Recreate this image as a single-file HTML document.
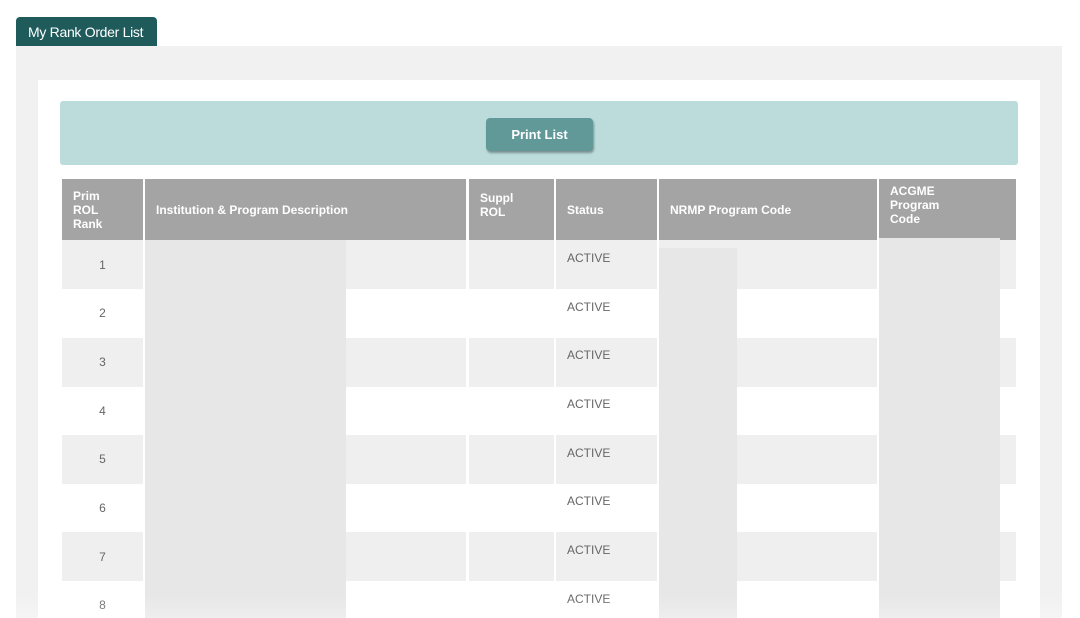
<!DOCTYPE html>
<html style="width:1080px;height:618px;overflow:hidden"><head><style>
*{margin:0;padding:0;box-sizing:border-box}
body{width:1080px;height:618px;overflow:hidden;background:#fff;font-family:"Liberation Sans",Arial,sans-serif;position:relative}
.abs{position:absolute}
.tab{left:16px;top:17px;width:141px;height:30px;background:#1f5b5b;border-radius:4px 4px 0 0;color:#fff;font-size:14px;line-height:30px;padding-left:12px;letter-spacing:-0.3px}
.outer{left:16px;top:46px;width:1046px;height:572px;background:#f1f1f1}
.inner{left:38px;top:80px;width:1002px;height:538px;background:#fff}
.bar{left:60px;top:101px;width:958px;height:64px;background:#bcdcdc;border-radius:3px}
.btn{left:486px;top:118px;width:107px;height:33px;background:#619898;border-radius:4px;color:#fff;font-weight:bold;font-size:13px;text-align:center;line-height:33px;box-shadow:1px 2px 2px rgba(0,0,0,.35)}
.th{top:179px;height:61px;background:#a4a4a4;color:#fff;font-weight:bold;font-size:12px;line-height:14px;padding-left:11px;display:flex;align-items:center}
.row{left:62px;width:954px;height:49px}
.num{width:81px;text-align:center;font-size:12px;color:#666}
.st{left:567px;font-size:12px;color:#666}
.red{background:#e7e7e7}
.vl{background:#fff;width:2px}
</style></head><body>
<div class="abs tab">My Rank Order List</div>
<div class="abs outer"></div>
<div class="abs inner"></div>
<div class="abs bar"></div>
<div class="abs btn">Print List</div>

<div class="abs th" style="left:62px;width:81px">Prim<br>ROL<br>Rank</div>
<div class="abs th" style="left:145px;width:321px">Institution &amp; Program Description</div>
<div class="abs th" style="left:469px;width:85px;padding-bottom:10px">Suppl<br>ROL</div>
<div class="abs th" style="left:556px;width:101px">Status</div>
<div class="abs th" style="left:659px;width:218px">NRMP Program Code</div>
<div class="abs th" style="left:879px;width:137px;padding-bottom:10px">ACGME<br>Program<br>Code</div>

<div class="abs row" style="top:240px;background:#efefef"></div>
<div class="abs row" style="top:338px;background:#efefef"></div>
<div class="abs row" style="top:435px;background:#efefef"></div>
<div class="abs row" style="top:532px;background:#efefef"></div>

<div class="abs vl" style="left:143px;top:240px;height:378px"></div>
<div class="abs vl" style="left:466px;top:240px;height:378px;width:3px"></div>
<div class="abs vl" style="left:554px;top:240px;height:378px"></div>
<div class="abs vl" style="left:657px;top:240px;height:378px"></div>
<div class="abs vl" style="left:877px;top:240px;height:378px"></div>

<div class="abs red" style="left:145px;top:240px;width:201px;height:378px"></div>
<div class="abs red" style="left:659px;top:248px;width:78px;height:370px"></div>
<div class="abs red" style="left:879px;top:238px;width:121px;height:380px"></div>

<div class="abs num" style="left:62px;top:258px">1</div>
<div class="abs num" style="left:62px;top:306px">2</div>
<div class="abs num" style="left:62px;top:355px">3</div>
<div class="abs num" style="left:62px;top:404px">4</div>
<div class="abs num" style="left:62px;top:452px">5</div>
<div class="abs num" style="left:62px;top:501px">6</div>
<div class="abs num" style="left:62px;top:550px">7</div>
<div class="abs num" style="left:62px;top:598px">8</div>

<div class="abs st" style="top:251px">ACTIVE</div>
<div class="abs st" style="top:300px">ACTIVE</div>
<div class="abs st" style="top:348px">ACTIVE</div>
<div class="abs st" style="top:397px">ACTIVE</div>
<div class="abs st" style="top:446px">ACTIVE</div>
<div class="abs st" style="top:494px">ACTIVE</div>
<div class="abs st" style="top:543px">ACTIVE</div>
<div class="abs st" style="top:592px">ACTIVE</div>

<div class="abs" style="left:0;top:595px;width:1080px;height:23px;background:linear-gradient(rgba(255,255,255,0),rgba(255,255,255,.3))"></div>
</body></html>
